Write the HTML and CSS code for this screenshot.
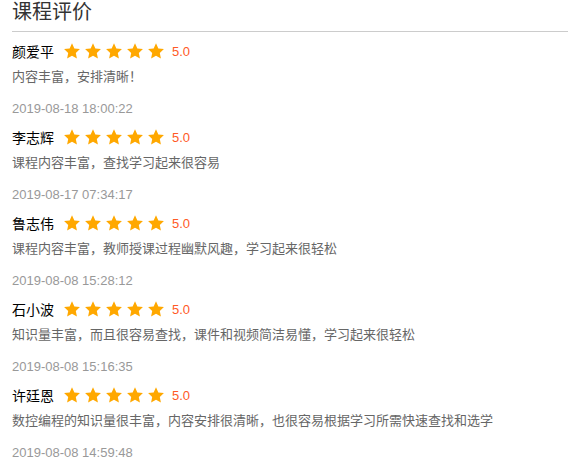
FILE: index.html
```html
<!DOCTYPE html>
<html lang="zh">
<head>
    <meta charset="UTF-8">
    <link rel="stylesheet" href="styles.css">
    <title>课程评价</title>
</head>
<body>
    <div class="review-box">
        <h2 class="review-title">课程评价</h2>

        <ul class="review-list" id="review-list"></ul>
    </div>

    <script>
        const reviews = [
            { name: '颜爱平', score: '5.0', text: '内容丰富，安排清晰！', time: '2019-08-18 18:00:22' },
            { name: '李志辉', score: '5.0', text: '课程内容丰富，查找学习起来很容易', time: '2019-08-17 07:34:17' },
            { name: '鲁志伟', score: '5.0', text: '课程内容丰富，教师授课过程幽默风趣，学习起来很轻松', time: '2019-08-08 15:28:12' },
            { name: '石小波', score: '5.0', text: '知识量丰富，而且很容易查找，课件和视频简洁易懂，学习起来很轻松', time: '2019-08-08 15:16:35' },
            { name: '许廷恩', score: '5.0', text: '数控编程的知识量很丰富，内容安排很清晰，也很容易根据学习所需快速查找和选学', time: '2019-08-08 14:59:48' }
        ];

        const star = '<svg class="star" viewBox="0 0 24 24"><polygon points="12,0.5 15.53,8.15 23.9,9.14 17.71,14.85 19.35,23.1 12,19 4.65,23.1 6.29,14.85 0.1,9.14 8.47,8.15"/></svg>';

        const list = document.getElementById('review-list');
        reviews.forEach(r => {
            const li = document.createElement('li');
            li.className = 'review-item';
            li.innerHTML =
                '<div class="review-head">' +
                    '<span class="review-name">' + r.name + '</span>' +
                    '<span class="stars">' + star.repeat(5) + '</span>' +
                    '<span class="review-score">' + r.score + '</span>' +
                '</div>' +
                '<p class="review-text">' + r.text + '</p>' +
                '<p class="review-time">' + r.time + '</p>';
            list.appendChild(li);
        });
    </script>
</body>
</html>
```

FILE: styles.css
```css
body {
    font-family: "Liberation Sans", "Noto Sans CJK SC", sans-serif;
    background-color: #ffffff;
    margin: 0;
    padding: 0;
}

.review-box {
    padding: 0 0 0 12px;
}

.review-title {
    margin: 0;
    font-size: 20px;
    font-weight: normal;
    line-height: 24px;
    color: #333;
    padding-bottom: 7px;
    border-bottom: 1px solid #cccccc;
}

.review-list {
    list-style: none;
    margin: 0;
    padding: 6px 0 0 0;
}

.review-item {
    margin-bottom: 2px;
}

.review-head {
    display: flex;
    align-items: center;
    height: 26px;
}

.review-name {
    font-size: 14px;
    color: #000;
    margin-right: 10px;
}

.stars {
    display: flex;
    gap: 5px;
}

.star {
    width: 16px;
    height: 16px;
    fill: #ffa800;
}

.review-score {
    font-size: 13px;
    color: #ff5a26;
    margin-left: 8px;
}

.review-text {
    margin: 0;
    font-size: 13px;
    line-height: 26px;
    color: #666;
}

.review-time {
    margin: 6px 0 0 0;
    font-size: 13px;
    line-height: 26px;
    color: #999;
}
```
